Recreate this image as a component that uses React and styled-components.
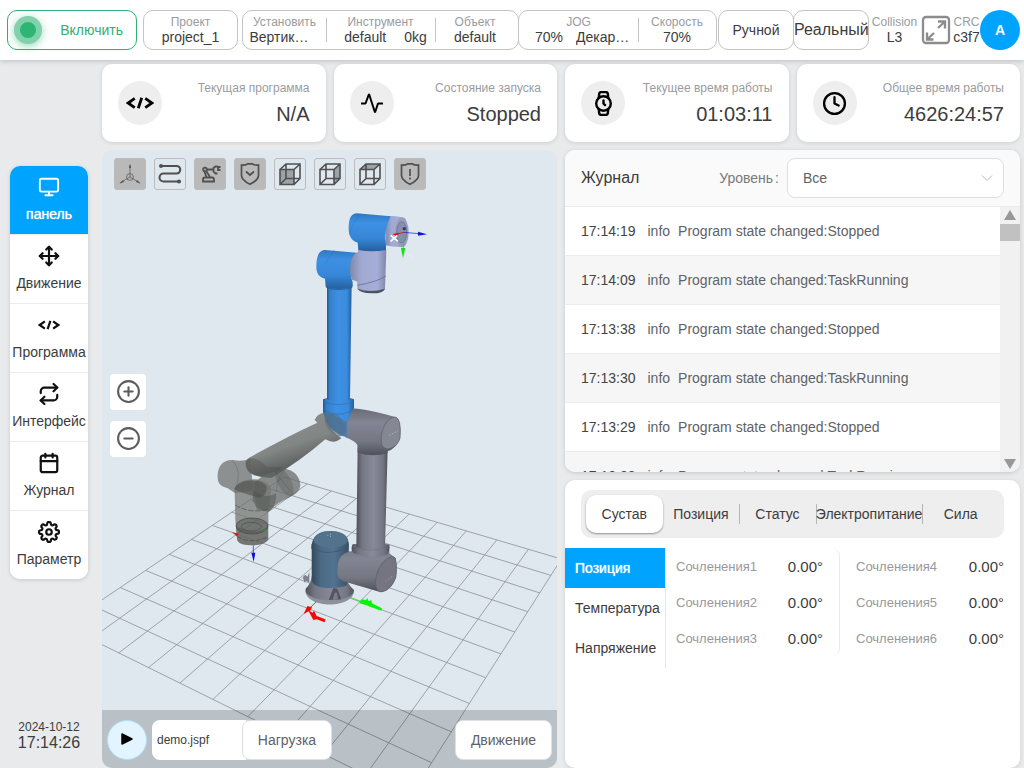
import React, { useState } from "react";
import styled, { createGlobalStyle } from "styled-components";
import {
  FiMonitor,
  FiMove,
  FiRepeat,
  FiCalendar,
  FiSettings,
  FiWatch,
  FiClock,
  FiPlusCircle,
  FiMinusCircle,
} from "react-icons/fi";

const GlobalStyle = createGlobalStyle`
  * {
    box-sizing: border-box;
  }

  body {
    margin: 0;
    background: #e9eaec;
    color: #3c3c3c;
    font-family: "Liberation Sans", Arial, sans-serif;
    font-size: 14px;
    overflow: hidden;
  }

  button, input, select {
    font: inherit;
    color: inherit;
    margin: 0;
    padding: 0;
    border: none;
    background: none;
  }
`;

function CodeIcon({ size }) {
  return (
    <svg width={size} height={size} viewBox="0 0 24 24" fill="none" stroke="currentColor" strokeWidth="2.4">
      <path d="M7.5 8 L1.8 12 L7.5 16 M16.5 8 L22.2 12 L16.5 16 M13.5 7.5 L10.5 16.5" />
    </svg>
  );
}

function PulseIcon() {
  return (
    <svg width="24" height="24" viewBox="0 0 24 24" fill="none" stroke="currentColor" strokeWidth="2">
      <path d="M1 12.5 H5.5 L9 3 L15 21.5 L18 12.5 H23" strokeLinejoin="bevel" />
    </svg>
  );
}

function AxesIcon() {
  return (
    <svg width="24" height="24" viewBox="0 0 24 24" fill="none" stroke="currentColor" strokeWidth="0.7">
      <circle cx="12" cy="15" r="3.4" />
      <path d="M12 15 V3 M12 15 L2 21 M12 15 L22 21" />
      <path d="M11 6 L12 1.5 L13 6 Z M5 18 L1.5 21.5 L6 20 Z M19 18 L22.5 21.5 L18 20 Z" fill="currentColor" stroke="none" />
    </svg>
  );
}

function PathIcon() {
  return (
    <svg width="24" height="24" viewBox="0 0 24 24" fill="none" stroke="currentColor" strokeWidth="2.1">
      <path d="M3 4 H18.5 A3.700 3.700 0 0 1 18.5 11.500 H5.500 A4 4 0 0 0 5.500 19.500 H21" />
      <circle cx="3" cy="4" r="2" fill="currentColor" stroke="none" />
      <circle cx="21" cy="19.5" r="2" fill="currentColor" stroke="none" />
    </svg>
  );
}

function ArmIcon() {
  return (
    <svg width="24" height="24" viewBox="0 0 24 24" fill="none" stroke="currentColor" strokeWidth="1.8">
      <path d="M5 19.500 V17.500 Q5 15.500 7 15.500 H14 Q16 15.500 16 17.500 V19.500 Z" />
      <path d="M8.500 15 L6.500 10 M12 15 L8.500 9.500 M9 7.500 H15 M19.500 4.500 H17.500 L15.500 6 V9.500 L17.500 11.500 H19.500 M22.500 5 H20 V8 H22.500" />
      <circle cx="7" cy="7.5" r="1.8" />
    </svg>
  );
}

function ShieldIcon({ alert }) {
  return (
    <svg width="24" height="24" viewBox="0 0 24 24" fill="none" stroke="currentColor" strokeWidth="1.7">
      <path d="M3.500 3 Q7.500 3.500 9.500 1.800 H14.500 Q16.500 3.500 20.500 3 V13.500 Q20.500 18 12 22.300 Q3.500 18 3.500 13.500 Z" />
      {alert ? <path d="M12 7 V14 M12 15.500 V17.500" /> : <path d="M8 9.500 L12 13 L16 9.500" />}
    </svg>
  );
}

const cubeFaces = {
  front: "M2 7.500 H16 V22.500 H2 Z",
  right: "M16 7.500 L22 2 V16.500 L16 22.500 Z",
  top: "M2 7.500 L8 2 H22 L16 7.500 Z",
};

function CubeIcon({ face }) {
  return (
    <svg width="24" height="24" viewBox="0 0 24 24" fill="none" stroke="currentColor" strokeWidth="1.6">
      <path d={cubeFaces[face]} fill="#9ba2a8" stroke="none" />
      <path d="M2 7.500 H16 V22.500 H2 Z M2 7.500 L8 2 H22 V16.500 L16 22.500 M16 7.500 L22 2 M8 2 V16.500 H22 M8 16.500 L2 22.500" />
    </svg>
  );
}

function ExpandIcon() {
  return (
    <svg width="30" height="30" viewBox="0 0 30 30" fill="none" stroke="#8c8c8c" strokeWidth="2.3">
      <rect x="2" y="2" width="26" height="26" rx="3" />
      <path d="M17 6.500 H24 V13.500 M24 6.500 L17 13 M12.500 24.500 H6 V17.500 M6 24.500 L13 18" />
    </svg>
  );
}

// ground plane corners: back, right, front, left
const floor = [
  [284, 477],
  [561.3, 559],
  [410, 796.7],
  [63.7, 625.7],
];

function project(u, v) {
  const [[x0, y0], [x1, y1], [x2, y2], [x3, y3]] = floor;
  const dx1 = x1 - x2;
  const dx2 = x3 - x2;
  const dy1 = y1 - y2;
  const dy2 = y3 - y2;
  const sx = x0 - x1 + x2 - x3;
  const sy = y0 - y1 + y2 - y3;
  const det = dx1 * dy2 - dx2 * dy1;
  const g = (sx * dy2 - dx2 * sy) / det;
  const h = (dx1 * sy - sx * dy1) / det;
  const w = g * u + h * v + 1;
  const x = ((x1 - x0 + g * x1) * u + (x3 - x0 + h * x3) * v + x0) / w;
  const y = ((y1 - y0 + g * y1) * u + (y3 - y0 + h * y3) * v + y0) / w;
  return `${x.toFixed(1)} ${y.toFixed(1)}`;
}

const gridPath = Array.from({ length: 11 }, (_, i) => i / 10)
  .map((t) => `M${project(t, 0)} L${project(t, 1)} M${project(0, t)} L${project(1, t)}`)
  .join(" ");

function Gradient({ id, stops, vertical }) {
  return (
    <linearGradient id={id} x1="0" y1="0" x2={vertical ? 0 : 1} y2={vertical ? 1 : 0}>
      {stops.map(([offset, color]) => (
        <stop key={offset} offset={offset} stopColor={color} />
      ))}
    </linearGradient>
  );
}

function RobotScene() {
  return (
    <Scene viewBox="102 150 455 618" preserveAspectRatio="xMidYMid slice">
      <defs>
        <Gradient id="blue" stops={[[0, "#235a94"], [0.12, "#3580cb"], [0.45, "#3d90e4"], [0.8, "#3b8cde"], [1, "#245f9d"]]} />
        <Gradient id="blueCap" vertical stops={[[0, "#2f78c2"], [0.25, "#3d90e4"], [0.65, "#3787d8"], [1, "#245f9d"]]} />
        <Gradient id="lilac" stops={[[0, "#8088aa"], [0.3, "#a0a9d0"], [0.75, "#a5aed8"], [1, "#7f87a8"]]} />
        <Gradient id="grey" stops={[[0, "#4e5059"], [0.2, "#757884"], [0.55, "#878a99"], [0.85, "#747683"], [1, "#4f515b"]]} />
        <Gradient id="greyCap" vertical stops={[[0, "#686a75"], [0.3, "#828593"], [0.7, "#757783"], [1, "#4e5059"]]} />
        <Gradient id="slate" stops={[[0, "#33495c"], [0.25, "#4b6a84"], [0.6, "#527390"], [1, "#3a5166"]]} />
        <linearGradient id="ghostLink" x1="0.35" y1="0.25" x2="0.6" y2="0.75">
          <stop offset="0" stopColor="#777a77" />
          <stop offset="0.5" stopColor="#70736f" />
          <stop offset="1" stopColor="#464845" />
        </linearGradient>
      </defs>

      <path d={gridPath} fill="none" stroke="#8d9297" strokeWidth="0.9" opacity="0.9" />

      <g transform="translate(200 390) scale(0.33333)">
        {/* base */}
        <path d="M308 562 l8 -8 l6 6 l6 -14 v32 l-10 -6 l-4 6 z" fill="#7c818b" />
        <path d="M336 556 Q334 580 317 596 C308 648 462 655 462 600 Q444 586 438 562 Z" fill="url(#grey)" />
        <path d="M316 600 C314 656 462 660 462 600 C458 644 322 640 316 600 Z" fill="#8e909c" />
        <path d="M386 630 L400 594 L412 596 L424 628 Z" fill="#54565f" />
        <path d="M398 630 L404 608 H411 L414 628 Z" fill="#7b7d89" />
        <path d="M335 462 V570 Q340 594 390 594 Q425 594 442 584 L446 462 Z" fill="url(#slate)" />
        <path d="M334 476 C334 440 356 422 392 423 C426 423 448 438 446 466 C448 492 440 508 420 520 C370 500 345 488 334 476 Z" fill="url(#slate)" />
        <ellipse cx="392" cy="449" rx="51" ry="25" fill="#53728c" />
        <path d="M340 470 Q356 492 400 486 T446 458" fill="none" stroke="#3b5468" strokeWidth="2" />
        <path d="M382 436 h3 M390 433 h3 M390 439 h3" stroke="#c7d3dd" strokeWidth="2" />

        {/* shoulder */}
        <path d="M458 462 L455 484 C430 488 416 500 413 528 Q410 555 416 564 L430 574 L538 605 C556 608 580 590 588 560 Q592 520 586 504 L568 490 V464 Z" fill="url(#greyCap)" />
        <path d="M538 605 C520 594 524 548 548 518 Q574 490 586 504 Q592 530 588 560 C578 592 556 608 538 605 Z" fill="#747581" stroke="#5b5d68" strokeWidth="2" />
        <path d="M456 466 Q452 482 462 490 Q512 508 560 494 Q570 484 568 464 Q512 452 456 466 Z" fill="url(#grey)" />
        <path d="M457 468 Q510 492 567 468" fill="none" stroke="#696b76" strokeWidth="2" />
        <path d="M556 574 l20 -14" stroke="#b5b7c3" strokeWidth="2" strokeDasharray="4 6" />

        {/* lower arm and elbow */}
        <path d="M473 175 H563 L555 472 Q512 486 469 472 Z" fill="url(#grey)" />
        <path d="M452 55 Q500 57 588 82 C600 88 604 110 600 145 C590 172 572 182 563 184 L562 190 Q516 202 473 188 L472 164 Q460 150 436 142 Q430 80 452 55 Z" fill="url(#greyCap)" />
        <path d="M588 82 C560 76 536 130 546 166 Q556 182 574 174 Q594 166 600 145 Q604 88 588 82 Z" fill="#858793" stroke="#5c5e69" strokeWidth="2" />
        <path d="M473 186 Q516 200 562 188" fill="none" stroke="#5c5e69" strokeWidth="1" />
        <path d="M568 136 l26 -14" stroke="#c4c6d2" strokeWidth="2" strokeDasharray="4 5" />

        {/* blue elbow */}
        <path d="M369 28 Q415 8 462 28 V54 C444 74 440 108 440 142 Q400 130 376 92 L369 66 Z" fill="url(#blue)" />
        <path d="M369 34 Q415 54 462 34 M372 62 Q415 82 452 64" fill="none" stroke="#2a70b6" strokeWidth="2" />
      </g>

      <g transform="translate(200 200) scale(0.33333)">
        {/* upper arm */}
        <path d="M381 250 H455 L450 600 Q414 614 381 598 Z" fill="url(#blue)" />
        <path d="M376 150 C352 150 349 180 349 200 C349 228 364 232 375 236 L377 260 Q416 274 458 260 V246 C448 222 452 180 470 158 Z" fill="url(#blueCap)" />
        <path d="M378 262 Q416 276 457 262" fill="none" stroke="#1f5385" strokeWidth="2" />
        <path d="M404 150 Q380 180 376 196" fill="none" stroke="#2a70b6" strokeWidth="1" />

        {/* wrist */}
        <path d="M474 150 H559 L555 268 Q548 280 515 279 Q480 277 472 266 V246 Q462 240 457 240 C446 222 448 178 464 162 L474 156 Z" fill="url(#lilac)" />
        <path d="M472 266 Q512 280 555 266 Q548 281 515 280 Q480 278 472 266 Z" fill="#4c5063" />
        <path d="M472 256 Q530 246 558 228" fill="none" stroke="#5d6280" strokeWidth="2" />
        <path d="M560 50 Q590 44 616 56 L612 140 Q590 144 556 136 Z" fill="url(#lilac)" />
        <path d="M470 40 C448 42 446 64 446 90 C448 118 462 124 473 128 L475 150 Q516 158 558 150 V138 Q550 90 572 49 Z" fill="url(#blueCap)" />
        <path d="M486 42 Q454 66 450 104" fill="none" stroke="#2a70b6" strokeWidth="1" />
        <ellipse cx="606" cy="97" rx="20" ry="45" fill="#969dbe" />
        <ellipse cx="605" cy="97" rx="15" ry="32" fill="#878eae" stroke="#666b89" strokeWidth="2" />
        <circle cx="613" cy="86" r="5" fill="#3c3f52" />

        {/* tool frame */}
        <path d="M612 97 L656 101" stroke="#1414d8" strokeWidth="2" />
        <path d="M654 95 L681 103 L654 107 Z" fill="#1414d8" />
        <path d="M610 97 V146" stroke="#18d818" strokeWidth="2" />
        <path d="M603 144 H616 L609 175 Z" fill="#12e012" />
        <path d="M612 97 L592 102" stroke="#e02020" strokeWidth="3" />
        <path d="M578 102 L596 98 L592 110 Z" fill="#e01010" />
        <path d="M572 106 L594 124 M592 106 L572 124" stroke="#ffffff" strokeWidth="5" />
        <path d="M620 160 L630 166 L638 158 M630 166 L638 172" fill="none" stroke="#ebeff0" strokeWidth="3" />
      </g>

      {/* ghost arm */}
      <g transform="translate(200 390) scale(0.33333)">
        <path d="M372 68 Q350 72 344 90 L352 98 Q260 140 150 202 Q132 210 138 232 Q150 262 214 264 Q300 214 376 148 Q404 164 424 144 Q396 130 378 84 Z" fill="url(#ghostLink)" opacity="0.84" />
        <path d="M374 68 Q376 110 410 132 Q424 140 440 140 L441 96 L376 64 Z" fill="#59707f" opacity="0.55" />
        <ellipse cx="406" cy="104" rx="38" ry="24" transform="rotate(52 406 104)" fill="#4c6375" fillOpacity="0.3" stroke="#66717a" strokeWidth="2" />
        <path d="M96 210 C64 210 52 234 53 262 C54 286 66 290 82 294 L106 310 L160 300 L150 206 Q130 216 96 210 Z" fill="#6c6f6c" opacity="0.72" />
        <path d="M96 210 Q130 240 104 306" fill="none" stroke="#50534f" strokeWidth="1" />
        <path d="M206 244 L250 236 C284 238 300 262 301 284 C300 304 286 312 272 320 Q226 340 206 366 L170 360 L160 280 Z" fill="#656864" opacity="0.72" />
        <ellipse cx="253" cy="276" rx="20" ry="46" transform="rotate(-28 253 276)" fill="#4c4f4b" opacity="0.3" />
        <path d="M226 246 Q250 280 280 312 M230 306 Q226 270 256 238" fill="none" stroke="#50534f" strokeWidth="1" />
        <path d="M104 302 C106 272 144 266 170 268 Q210 276 214 300 L205 364 V450 Q190 466 156 466 Q122 466 112 452 L106 390 Z" fill="#747773" opacity="0.75" />
        <path d="M102 298 C112 266 186 262 200 290 Q200 316 180 324 Q126 310 102 298 Z" fill="#4e504d" opacity="0.6" />
        <path d="M160 300 Q194 330 228 310 Q232 340 210 362 Q170 366 158 330 Z" fill="#4c4f4b" opacity="0.45" />
        <path d="M138 212 Q160 192 200 230 L250 232 Q200 262 160 256 Q134 244 138 212 Z" fill="#4e504d" opacity="0.4" />
        <ellipse cx="156" cy="408" rx="48" ry="24" fill="#454643" fillOpacity="0.4" stroke="#454744" strokeWidth="2" />
        <ellipse cx="154" cy="410" rx="30" ry="13" fill="none" stroke="#4c4e4a" strokeWidth="2" />
        <path d="M108 408 Q108 436 112 452 Q122 466 156 466 Q190 466 204 450 V408 Q170 440 108 408 Z" fill="#4a4c48" opacity="0.4" />
        <path d="M112 440 Q156 464 204 440" fill="none" stroke="#454845" strokeWidth="2" strokeDasharray="14 5" />
        <path d="M106 345 Q150 372 204 358" fill="none" stroke="#4f524e" strokeWidth="2" strokeDasharray="16 5" />
        <path d="M160 466 V492" stroke="#1414d8" strokeWidth="2" />
        <path d="M154 488 H166 L161 515 Z" fill="#1010d0" />
        <path d="M96 427 L118 431 L110 439 Z" fill="#d02020" />
        <path d="M186 424 L202 418" stroke="#3d8a3d" strokeWidth="3" />

        {/* base frame */}
        <path d="M348 636 L328 656" stroke="#f02020" strokeWidth="2" />
        <path d="M322 648 L336 652 L330 664 L338 668 L342 662 L350 678 L376 688 L374 697 L350 688 L340 690 L326 664 L311 672 Z" fill="#fa0505" />
        <path d="M452 622 L482 634" stroke="#20d820" strokeWidth="2" />
        <path d="M484 628 L498 630 L502 624 L506 634 L514 630 L516 640 L546 655 L544 662 L510 650 L500 646 L478 640 Z" fill="#05f505" />
      </g>
    </Scene>
  );
}

const navItems = [
  { label: "панель", icon: <FiMonitor size={22} /> },
  { label: "Движение", icon: <FiMove size={22} strokeWidth={2.4} /> },
  { label: "Программа", icon: <CodeIcon size={22} /> },
  { label: "Интерфейс", icon: <FiRepeat size={22} strokeWidth={2.4} /> },
  { label: "Журнал", icon: <FiCalendar size={22} strokeWidth={2.4} /> },
  { label: "Параметр", icon: <FiSettings size={22} strokeWidth={2.4} /> },
];

const stats = [
  { label: "Текущая программа", value: "N/A", icon: <CodeIcon size={28} /> },
  { label: "Состояние запуска", value: "Stopped", icon: <PulseIcon /> },
  { label: "Текущее время работы", value: "01:03:11", icon: <FiWatch size={25} strokeWidth={2.3} /> },
  { label: "Общее время работы", value: "4626:24:57", icon: <FiClock size={25} strokeWidth={2.2} /> },
];

const tools = [
  { name: "Оси", filled: true, icon: <AxesIcon /> },
  { name: "Траектория", icon: <PathIcon /> },
  { name: "Модель", filled: true, icon: <ArmIcon /> },
  { name: "Защита", filled: true, icon: <ShieldIcon /> },
  { name: "Вид спереди", icon: <CubeIcon face="front" /> },
  { name: "Вид справа", icon: <CubeIcon face="right" /> },
  { name: "Вид сверху", icon: <CubeIcon face="top" /> },
  { name: "Предупреждение", filled: true, icon: <ShieldIcon alert /> },
];

const logs = [
  ["17:14:19", "Stopped"],
  ["17:14:09", "TaskRunning"],
  ["17:13:38", "Stopped"],
  ["17:13:30", "TaskRunning"],
  ["17:13:29", "Stopped"],
  ["17:13:28", "TaskRunning"],
];

const tabs = ["Сустав", "Позиция", "Статус", "Электропитание", "Сила"];
const sideTabs = ["Позиция", "Температура", "Напряжение"];
const jointColumns = [
  [1, 2, 3],
  [4, 5, 6],
];

export default function App() {
  const [nav, setNav] = useState(0);
  const [tab, setTab] = useState(0);
  const [sideTab, setSideTab] = useState(0);

  return (
    <Page>
      <GlobalStyle />
      <Header>
        <Power>
          <Led />
          <span>Включить</span>
        </Power>
        <Box $width={95}>
          <Field $grow>
            <Label>Проект</Label>
            <Value>project_1</Value>
          </Field>
        </Box>
        <WideBox>
          <Field $width={83}>
            <Label>Установить</Label>
            <ClippedValue $width={70}>Вертик…</ClippedValue>
          </Field>
          <Field $width={109} $divided>
            <Label>Инструмент</Label>
            <Pair $gap={18} $indent={10}>
              <span>default</span>
              <span>0kg</span>
            </Pair>
          </Field>
          <Field $width={80} $divided>
            <Label>Объект</Label>
            <Value>default</Value>
          </Field>
        </WideBox>
        <Box $width={199} $joined>
          <Field $width={119}>
            <Label>JOG</Label>
            <Pair $gap={13} $indent={8}>
              <span>70%</span>
              <ClippedValue $width={54}>Декар…</ClippedValue>
            </Pair>
          </Field>
          <Field $grow $divided>
            <Label>Скорость</Label>
            <Value>70%</Value>
          </Field>
        </Box>
        <ModeButton>Ручной</ModeButton>
        <ModeButton $large $joined>
          Реальный
        </ModeButton>
        <Field $width={51}>
          <Label>Collision</Label>
          <Value>L3</Value>
        </Field>
        <IconButton aria-label="Развернуть">
          <ExpandIcon />
        </IconButton>
        <Field $width={27}>
          <Label>CRC</Label>
          <Value>c3f7</Value>
        </Field>
        <Avatar>A</Avatar>
      </Header>

      <Body>
        <Sidebar>
          <Nav>
            {navItems.map((item, i) => (
              <NavItem key={item.label} $active={nav === i} onClick={() => setNav(i)}>
                {item.icon}
                <span>{item.label}</span>
              </NavItem>
            ))}
          </Nav>
          <Clock>
            2024-10-12
            <ClockTime>17:14:26</ClockTime>
          </Clock>
        </Sidebar>

        <Content>
          <Stats>
            {stats.map((stat) => (
              <StatCard key={stat.label}>
                <StatIcon>{stat.icon}</StatIcon>
                <StatText>
                  <Label>{stat.label}</Label>
                  <StatValue>{stat.value}</StatValue>
                </StatText>
              </StatCard>
            ))}
          </Stats>

          <Panels>
            <Viewer>
              <RobotScene />
              <Toolbar>
                {tools.map((tool) => (
                  <Tool key={tool.name} aria-label={tool.name} $filled={tool.filled}>
                    {tool.icon}
                  </Tool>
                ))}
              </Toolbar>
              <ZoomGroup>
                <ZoomButton aria-label="Увеличить">
                  <FiPlusCircle size={25} />
                </ZoomButton>
                <ZoomButton aria-label="Уменьшить">
                  <FiMinusCircle size={25} />
                </ZoomButton>
              </ZoomGroup>
              <PlayerBar>
                <Play aria-label="Запустить">
                  <svg width="14" height="14" viewBox="0 0 14 14">
                    <path d="M2 2 L12 7 L2 12 Z" stroke="#000" strokeWidth="1.5" strokeLinejoin="round" />
                  </svg>
                </Play>
                <FileInput aria-label="Файл" defaultValue="demo.jspf" />
                <LoadButton>Нагрузка</LoadButton>
                <MoveButton>Движение</MoveButton>
              </PlayerBar>
            </Viewer>

            <RightColumn>
              <LogCard>
                <LogHeader>
                  <LogTitle>Журнал</LogTitle>
                  <LevelLabel htmlFor="level">
                    <span>Уровень</span>
                    <span>:</span>
                  </LevelLabel>
                  <SelectBox>
                    <Select id="level">
                      <option>Все</option>
                    </Select>
                    <Chevron viewBox="0 0 12 12">
                      <path d="M1 3.5 L6 8.5 L11 3.5" />
                    </Chevron>
                  </SelectBox>
                </LogHeader>
                <LogBody>
                  <LogList>
                    {logs.map(([time, state]) => (
                      <LogRow key={time}>
                        <LogTime>{time}</LogTime>
                        <LogLevel>info</LogLevel>
                        <span>Program state changed:{state}</span>
                      </LogRow>
                    ))}
                  </LogList>
                  <ScrollTrack>
                    <Arrow viewBox="0 0 14 10">
                      <path d="M1 10 L7 0 L13 10 Z" />
                    </Arrow>
                    <Thumb />
                    <Arrow viewBox="0 0 14 10">
                      <path d="M1 0 L7 10 L13 0 Z" />
                    </Arrow>
                  </ScrollTrack>
                </LogBody>
              </LogCard>

              <StateCard>
                <Tabs>
                  {tabs.map((name, i) => (
                    <Tab key={name} $active={tab === i} $line={i > tab + 1} onClick={() => setTab(i)}>
                      {name}
                    </Tab>
                  ))}
                </Tabs>
                <JointArea>
                  <SideTabs>
                    {sideTabs.map((name, i) => (
                      <SideTab key={name} $active={sideTab === i} onClick={() => setSideTab(i)}>
                        {name}
                      </SideTab>
                    ))}
                  </SideTabs>
                  <Joints>
                    {jointColumns.map((joints, i) => (
                      <JointColumn key={i} $bordered={i === 0}>
                        {joints.map((n) => (
                          <Joint key={n}>
                            <dt>Сочленения{n}</dt>
                            <dd>0.00°</dd>
                          </Joint>
                        ))}
                      </JointColumn>
                    ))}
                  </Joints>
                </JointArea>
              </StateCard>
            </RightColumn>
          </Panels>
        </Content>
      </Body>
    </Page>
  );
}

const Page = styled.div`
  display: flex;
  flex-direction: column;
  height: 100vh;
`;

const Header = styled.header`
  display: flex;
  align-items: center;
  flex: none;
  height: 60px;
  padding: 0 4px 0 7px;
  background: #ffffff;
  box-shadow: 0 1px 5px rgba(0, 0, 0, 0.2);
`;

const Power = styled.button`
  display: flex;
  align-items: center;
  justify-content: space-between;
  width: 130px;
  height: 40px;
  margin-right: 6px;
  padding: 0 13px 0 6px;
  border: 1px solid #2fae76;
  border-radius: 10px;
  color: #2fae76;
`;

const Led = styled.i`
  width: 28px;
  height: 28px;
  border: 6px solid #82d0ac;
  border-radius: 50%;
  background: #2cb673;
  box-shadow: 0 2px 8px rgba(44, 182, 115, 0.5);
`;

const Box = styled.div`
  display: flex;
  flex: none;
  width: ${(p) => p.$width}px;
  height: 40px;
  margin-left: ${(p) => (p.$joined ? "-1px" : "0")};
  margin-right: 1px;
  border: 1px solid #c4c4c4;
  border-radius: 10px;
`;

const WideBox = styled(Box)`
  flex: 1;
  width: auto;
  margin-left: 3px;
  margin-right: 0;
`;

const Field = styled.div`
  display: flex;
  flex-direction: column;
  align-items: center;
  justify-content: center;
  flex: ${(p) => (p.$grow ? "1" : "none")};
  width: ${(p) => (p.$width ? `${p.$width}px` : "auto")};
  min-width: 0;
  padding-bottom: 2px;
  white-space: nowrap;
  background: ${(p) =>
    p.$divided ? "linear-gradient(#c4c4c4, #c4c4c4) left center / 1px 24px no-repeat" : "none"};
`;

const Label = styled.span`
  font-size: 12px;
  line-height: 16px;
  color: #999c9f;
`;

const Value = styled.span`
  font-size: 14px;
  line-height: 15px;
`;

const ClippedValue = styled(Value)`
  width: ${(p) => p.$width}px;
  overflow: hidden;
  text-overflow: ellipsis;
`;

const Pair = styled.div`
  display: flex;
  gap: ${(p) => p.$gap}px;
  padding-left: ${(p) => p.$indent}px;
  line-height: 15px;
`;

const ModeButton = styled.button`
  flex: none;
  width: 76px;
  height: 40px;
  margin-left: ${(p) => (p.$joined ? "-1px" : "0")};
  border: 1px solid #c4c4c4;
  border-radius: 10px;
  font-size: ${(p) => (p.$large ? "16px" : "14px")};
  white-space: nowrap;
`;

const IconButton = styled.button`
  display: flex;
  margin: 0 2px 0 1px;
`;

const Avatar = styled.button`
  flex: none;
  width: 40px;
  height: 40px;
  border-radius: 50%;
  background: #00a4ff;
  color: #ffffff;
  font-weight: bold;
`;

const Body = styled.div`
  display: flex;
  flex: 1;
  min-height: 0;
`;

const Sidebar = styled.aside`
  display: flex;
  flex-direction: column;
  justify-content: space-between;
  flex: none;
  width: 98px;
  padding: 106px 10px 17px;
`;

const Nav = styled.nav`
  display: flex;
  flex-direction: column;
  border-radius: 10px;
  overflow: hidden;
  background: #ffffff;
  box-shadow: 0 1px 4px rgba(0, 0, 0, 0.15);
`;

const NavItem = styled.button`
  display: flex;
  flex-direction: column;
  align-items: center;
  justify-content: center;
  gap: 8px;
  height: 69px;
  padding-bottom: 2px;
  border-bottom: 1px solid #ebebeb;
  background: ${(p) => (p.$active ? "#00a4ff" : "#ffffff")};
  color: ${(p) => (p.$active ? "#ffffff" : "#3c3c3c")};
  text-shadow: ${(p) => (p.$active ? "0 0 1px #ffffff" : "none")};
  white-space: nowrap;

  svg {
    color: ${(p) => (p.$active ? "#ffffff" : "#111111")};
  }

  &:last-child {
    height: 68px;
    border-bottom: none;
  }
`;

const Clock = styled.time`
  display: flex;
  flex-direction: column;
  align-items: center;
  font-size: 12px;
  line-height: 16px;
`;

const ClockTime = styled.span`
  font-size: 16px;
`;

const Content = styled.main`
  display: flex;
  flex-direction: column;
  flex: 1;
  gap: 8px;
  min-width: 0;
  padding: 4px 4px 0;
`;

const Stats = styled.section`
  display: grid;
  grid-template-columns: repeat(4, 1fr);
  gap: 8px;
`;

const StatCard = styled.div`
  display: flex;
  align-items: center;
  justify-content: space-between;
  height: 78px;
  padding: 0 16px;
  border-radius: 10px;
  background: #ffffff;
  box-shadow: 0 1px 4px rgba(0, 0, 0, 0.12);
`;

const StatIcon = styled.div`
  display: flex;
  align-items: center;
  justify-content: center;
  width: 44px;
  height: 44px;
  border-radius: 50%;
  background: #eeeeee;
  color: #000000;
`;

const StatText = styled.div`
  display: flex;
  flex-direction: column;
  align-items: flex-end;
  gap: 6px;
`;

const StatValue = styled.span`
  font-size: 20px;
  line-height: 24px;
`;

const Panels = styled.div`
  display: grid;
  grid-template-columns: 1fr 1fr;
  gap: 8px;
  flex: 1;
  min-height: 0;
`;

const Viewer = styled.section`
  position: relative;
  display: flex;
  flex-direction: column;
  border-radius: 10px;
  overflow: hidden;
  background: #dfe7ef;
`;

const Scene = styled.svg`
  position: absolute;
  inset: 0;
  width: 100%;
  height: 100%;
`;

const Toolbar = styled.div`
  position: relative;
  display: flex;
  gap: 8px;
  padding: 8px 12px;
`;

const Tool = styled.button`
  display: flex;
  align-items: center;
  justify-content: center;
  width: 32px;
  height: 32px;
  border: 1px solid #b9bbbd;
  border-radius: 3px;
  background: ${(p) => (p.$filled ? "#b9b9b9" : "transparent")};
  color: #505050;
`;

const ZoomGroup = styled.div`
  position: relative;
  display: flex;
  flex-direction: column;
  gap: 11px;
  flex: 1;
  padding: 176px 8px 0;
`;

const ZoomButton = styled.button`
  display: flex;
  align-items: center;
  justify-content: center;
  width: 36px;
  height: 36px;
  padding-bottom: 2px;
  border-radius: 4px;
  background: #ffffff;
  color: #5c5c5c;
`;

const PlayerBar = styled.div`
  position: relative;
  display: flex;
  align-items: center;
  height: 58px;
  padding: 2px 5px 0;
  background: rgba(0, 0, 0, 0.17);
`;

const Play = styled.button`
  display: flex;
  align-items: center;
  justify-content: center;
  width: 40px;
  height: 40px;
  margin-right: 5px;
  padding-bottom: 2px;
  border: 1px solid #b3def5;
  border-radius: 50%;
  background: #e2f4ff;
`;

const FileInput = styled.input`
  width: 100px;
  height: 40px;
  padding: 0 5px;
  border-radius: 8px;
  background: #ffffff;
  font-size: 12px;
`;

const LoadButton = styled.button`
  width: 90px;
  height: 40px;
  margin-left: -10px;
  border: 1px solid #dcdfe6;
  border-radius: 8px;
  background: #ffffff;
  color: #606266;
`;

const MoveButton = styled(LoadButton)`
  width: 97px;
  margin-left: auto;
`;

const RightColumn = styled.div`
  display: grid;
  grid-template-rows: 322px 1fr;
  gap: 8px;
  min-width: 0;
`;

const LogCard = styled.section`
  display: flex;
  flex-direction: column;
  border-radius: 10px;
  overflow: hidden;
  background: #ffffff;
  box-shadow: 0 1px 4px rgba(0, 0, 0, 0.15);
`;

const LogHeader = styled.div`
  display: flex;
  align-items: center;
  flex: none;
  height: 57px;
  padding: 0 16px;
  border-bottom: 1px solid #ebebeb;
  background: #fafafa;
`;

const LogTitle = styled.h2`
  flex: 1;
  margin: 0;
  font-size: 16px;
  font-weight: normal;
`;

const LevelLabel = styled.label`
  display: flex;
  gap: 2px;
  margin-right: 8px;
  color: #77797c;
`;

const SelectBox = styled.div`
  position: relative;
  width: 217px;
`;

const Select = styled.select`
  width: 100%;
  height: 40px;
  padding: 0 15px;
  border: 1px solid #dcdfe6;
  border-radius: 8px;
  background: #ffffff;
  color: #606266;
  appearance: none;
`;

const Chevron = styled.svg`
  position: absolute;
  top: 14px;
  right: 11px;
  width: 12px;
  height: 12px;
  fill: none;
  stroke: #b4b8c0;
  pointer-events: none;
`;

const LogBody = styled.div`
  display: flex;
  flex: 1;
  min-height: 0;
`;

const LogList = styled.ul`
  flex: 1;
  margin: 0;
  padding: 0;
  list-style: none;
  overflow: hidden;
`;

const LogRow = styled.li`
  display: flex;
  align-items: center;
  height: 49px;
  padding: 0 16px;
  border-bottom: 1px solid #ebebeb;
  color: #606266;
  white-space: nowrap;

  &:nth-child(even) {
    background: #f6f6f6;
  }
`;

const LogTime = styled.time`
  margin-right: 12px;
  color: #444444;
`;

const LogLevel = styled.span`
  margin-right: 8px;
`;

const ScrollTrack = styled.div`
  display: flex;
  flex-direction: column;
  align-items: center;
  width: 20px;
  padding: 3px 0;
  background: #f1f1f1;
`;

const Arrow = styled.svg`
  width: 14px;
  height: 10px;
  fill: #989898;
`;

const Thumb = styled.div`
  width: 20px;
  height: 17px;
  margin: 4px 0 auto;
  background: #c1c1c1;
`;

const StateCard = styled.section`
  border-radius: 10px;
  background: #ffffff;
  box-shadow: 0 1px 4px rgba(0, 0, 0, 0.12);
`;

const Tabs = styled.div`
  display: flex;
  margin: 10px 16px;
  padding: 5px;
  border-radius: 10px;
  background: #eeeeee;
`;

const Tab = styled.button`
  flex: 1 1 0;
  height: 38px;
  border-radius: 10px;
  background: ${(p) =>
    p.$active
      ? "#ffffff"
      : p.$line
        ? "linear-gradient(#b5b5b5, #b5b5b5) left center / 1px 20px no-repeat"
        : "none"};
  box-shadow: ${(p) => (p.$active ? "0 1px 2px rgba(0, 0, 0, 0.4)" : "none")};
  white-space: nowrap;
`;

const JointArea = styled.div`
  display: flex;
`;

const SideTabs = styled.div`
  display: flex;
  flex-direction: column;
  width: 101px;
  border-right: 1px solid #e6e6e6;
`;

const SideTab = styled.button`
  height: 40px;
  padding: 0 10px;
  text-align: left;
  background: ${(p) => (p.$active ? "#00a4ff" : "none")};
  color: ${(p) => (p.$active ? "#ffffff" : "#3c3c3c")};
  text-shadow: ${(p) => (p.$active ? "0 0 1px #ffffff" : "none")};
`;

const Joints = styled.div`
  display: grid;
  grid-template-columns: 1fr 1fr;
  gap: 6px;
  align-items: start;
  flex: 1;
`;

const JointColumn = styled.dl`
  margin: 0;
  padding: 0 16px 0 10px;
  border-right: ${(p) => (p.$bordered ? "1px solid #ebebeb" : "none")};
  border-radius: 8px;
`;

const Joint = styled.div`
  display: flex;
  align-items: center;
  justify-content: space-between;
  height: 36px;

  dt {
    font-size: 13px;
    color: #999999;
  }

  dd {
    margin: 0;
    font-size: 15px;
  }
`;
